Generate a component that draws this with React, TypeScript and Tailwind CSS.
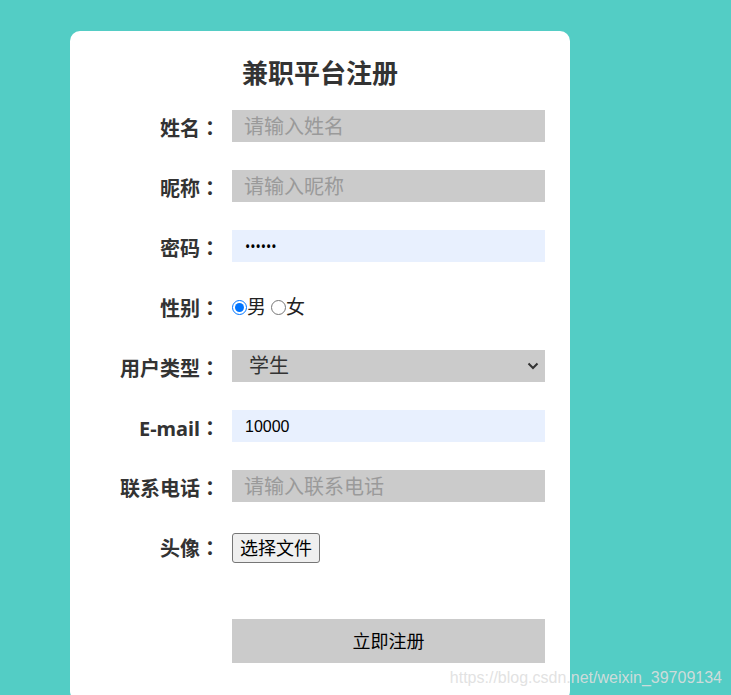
import { useState } from 'react';

const fields = [
  { label: '姓名', placeholder: '请输入姓名' },
  { label: '昵称', placeholder: '请输入昵称' },
];

function Label({ children }: { children: React.ReactNode }) {
  return (
    <label className="w-[150px] shrink-0 pt-[4px] text-right text-[20px] font-bold leading-[32px] text-[#333]">
      {children}
      <span
        className="inline-block w-[20px] text-center"
        style={{ fontFamily: '"Noto Sans CJK JP", sans-serif' }}
      >
        ：
      </span>
    </label>
  );
}

export default function App() {
  const [gender, setGender] = useState('male');

  return (
    <div
      className="relative h-[695px] w-full overflow-hidden bg-[#53cdc5] pt-[31px] pl-[70px]"
      style={{ fontFamily: '"Noto Sans", "Noto Sans CJK SC", sans-serif' }}
    >
      <div className="h-[670px] w-[500px] rounded-[10px] bg-white pt-[22px]">
        <h2 className="text-center text-[26px] font-bold leading-[40px] text-[#333]">兼职平台注册</h2>

        <form className="mt-[17px] flex flex-col gap-[28px]" onSubmit={(e) => e.preventDefault()}>
          {fields.map((f) => (
            <div key={f.label} className="flex h-[32px] items-center gap-[12px]">
              <Label>{f.label}</Label>
              <input
                className="h-[32px] w-[313px] bg-[#cbcbcb] pl-[12px] text-[20px] text-[#333] outline-none placeholder:text-[#9a9a9a]"
                placeholder={f.placeholder}
              />
            </div>
          ))}

          <div className="flex h-[32px] items-center gap-[12px]">
            <Label>密码</Label>
            <input
              type="password"
              defaultValue="123456"
              className="h-[32px] w-[313px] bg-[#e8f0fe] pl-[13px] text-[14px] text-black outline-none"
            />
          </div>

          <div className="flex h-[32px] items-center gap-[12px]">
            <Label>性别</Label>
            <div className="flex items-center pt-[2px] text-[19px] text-[#222]">
              <input
                type="radio"
                name="gender"
                checked={gender === 'male'}
                onChange={() => setGender('male')}
                className="m-0 h-[15px] w-[15px] accent-[#0075ff]"
              />
              <span className="leading-[32px]">男</span>
              <input
                type="radio"
                name="gender"
                checked={gender === 'female'}
                onChange={() => setGender('female')}
                className="my-0 ml-[5px] mr-0 h-[15px] w-[15px] accent-[#0075ff]"
              />
              <span className="leading-[32px]">女</span>
            </div>
          </div>

          <div className="flex h-[32px] items-center gap-[12px]">
            <Label>用户类型</Label>
            <div className="relative">
              <select className="h-[32px] w-[313px] appearance-none bg-[#cbcbcb] pl-[17px] text-[20px] text-[#333] outline-none">
                <option>学生</option>
                <option>企业</option>
              </select>
              <svg
                className="pointer-events-none absolute right-[6px] top-[11px]"
                width="12"
                height="10"
                viewBox="0 0 12 10"
                fill="none"
              >
                <path d="M1.5 2.5L6 7L10.5 2.5" stroke="#333" strokeWidth="2" />
              </svg>
            </div>
          </div>

          <div className="flex h-[32px] items-center gap-[12px]">
            <Label>E-mail</Label>
            <input
              defaultValue="10000"
              className="h-[32px] w-[313px] bg-[#e8f0fe] pl-[13px] pt-[2px] text-[16px] text-black outline-none"
              style={{ fontFamily: '"Liberation Sans", Arial, sans-serif' }}
            />
          </div>

          <div className="flex h-[32px] items-center gap-[12px]">
            <Label>联系电话</Label>
            <input
              className="h-[32px] w-[313px] bg-[#cbcbcb] pl-[12px] text-[20px] text-[#333] outline-none placeholder:text-[#9a9a9a]"
              placeholder="请输入联系电话"
            />
          </div>

          <div className="flex h-[32px] items-center gap-[12px]">
            <Label>头像</Label>
            <button
              type="button"
              className="mt-[4px] h-[30px] rounded-[3px] border border-[#767676] bg-[#efefef] px-[7px] text-[18px] leading-[26px] text-black"
            >
              选择文件
            </button>
          </div>

          <div className="mt-[29px] flex gap-[12px]">
            <div className="w-[150px] shrink-0" />
            <button
              type="submit"
              className="h-[44px] w-[313px] bg-[#cbcbcb] text-[18px] text-black"
            >
              立即注册
            </button>
          </div>
        </form>
      </div>

      <span
        className="absolute bottom-[7px] right-[9px] text-[16px] leading-[20px] text-[#dedede]/90"
        style={{ fontFamily: '"Liberation Sans", Arial, sans-serif' }}
      >
        https://blog.csdn.net/weixin_39709134
      </span>
    </div>
  );
}
